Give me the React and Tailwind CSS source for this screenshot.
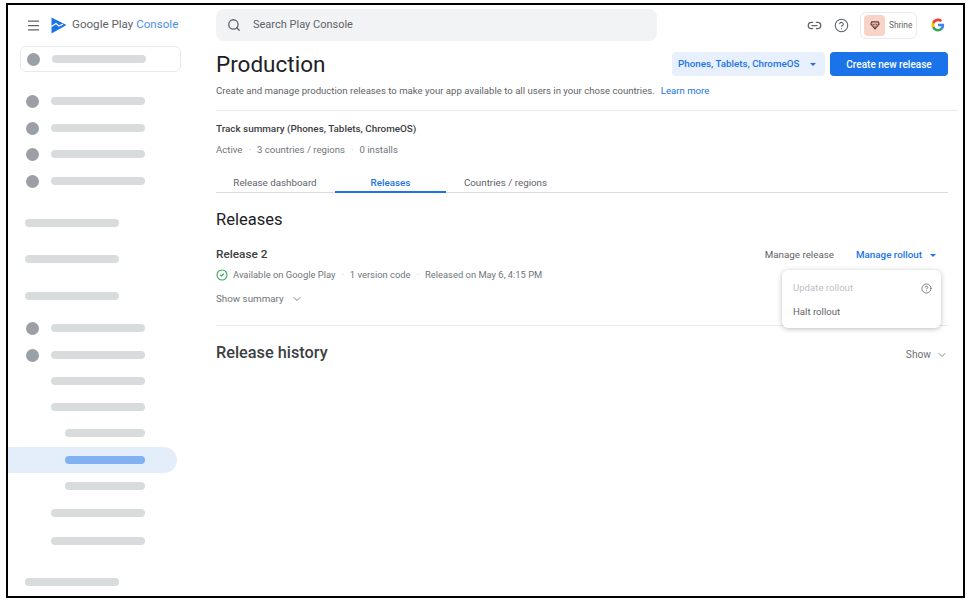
import React from "react";
import { ChevronDown, CircleCheck, CircleHelp, Link2, Menu, Search } from "lucide-react";

// mt = gap above the row, kind = how far the bar is indented
const NAV_ROWS = [
  { mt: "mt-[22.5px]", kind: "icon" },
  { mt: "mt-[14px]", kind: "icon" },
  { mt: "mt-[13px]", kind: "icon" },
  { mt: "mt-[14px]", kind: "icon" },
  { mt: "mt-[31.5px]", kind: "head" },
  { mt: "mt-[28px]", kind: "head" },
  { mt: "mt-[29px]", kind: "head" },
  { mt: "mt-[21.5px]", kind: "icon" },
  { mt: "mt-[14px]", kind: "icon" },
  { mt: "mt-[15.5px]", kind: "sub" },
  { mt: "mt-[18px]", kind: "sub" },
  { mt: "mt-[18px]", kind: "subsub" },
  { mt: "mt-[19px]", kind: "active" },
  { mt: "mt-[18px]", kind: "subsub" },
  { mt: "mt-[19px]", kind: "sub" },
  { mt: "mt-[20px]", kind: "sub" },
  { mt: "mt-[33px]", kind: "head" },
];

function Bar({ className }) {
  return <div className={`h-2 rounded-full bg-[#d8dcdc] ${className}`} />;
}

function NavRow({ row }) {
  if (row.kind === "icon") {
    return (
      <div className={`${row.mt} flex h-[13px] items-center pl-[18px]`}>
        <div className="h-[13px] w-[13px] rounded-full bg-[#9aa0a6]" />
        <Bar className="ml-3 w-[94px]" />
      </div>
    );
  }
  if (row.kind === "head") {
    return <div className={`${row.mt} flex h-2 pl-[17px]`}><Bar className="w-[94px]" /></div>;
  }
  if (row.kind === "sub") {
    return <div className={`${row.mt} flex h-2 pl-[43px]`}><Bar className="w-[94px]" /></div>;
  }
  if (row.kind === "subsub") {
    return <div className={`${row.mt} flex h-2 pl-[57px]`}><Bar className="w-[80px]" /></div>;
  }
  return (
    <div className={`${row.mt} flex h-2 items-center`}>
      <div className="flex h-[26px] w-[169px] shrink-0 items-center rounded-r-full bg-[#e4eefa] pl-[57px]">
        <div className="h-2 w-[80px] rounded-full bg-[#82b1f2]" />
      </div>
    </div>
  );
}

function Sidebar() {
  return (
    <aside className="w-[208px] shrink-0">
      <div className="flex h-[40px] items-center pl-[18px]">
        <Menu className="h-[15px] w-[15px] text-[#5f6368]" strokeWidth={2} />
        <svg viewBox="0 0 16 17" className="ml-[10px] h-[17px] w-[16px]">
          <path d="M0.5 0.5 15.5 8 0.5 16.5Z" fill="#1a73e8" />
          <path d="M0.5 9.5 5 6.5 8 9 12 7" fill="none" stroke="#fff" strokeWidth="1.3" />
        </svg>
        <span className="ml-[5px] text-[11.6px] whitespace-nowrap text-[#5f6368]">
          Google Play <span className="text-[#4a8fe7]">Console</span>
        </span>
      </div>
      <div className="mt-px ml-3 flex h-[26px] w-[161px] items-center rounded-md border border-[#e8eaed] pl-[6px]">
        <div className="h-[13px] w-[13px] rounded-full bg-[#9aa0a6]" />
        <Bar className="ml-3 w-[94px]" />
      </div>
      {NAV_ROWS.map((row, i) => <NavRow key={i} row={row} />)}
    </aside>
  );
}

function TopBar() {
  return (
    <div className="flex h-[40px] items-center pr-[15px]">
      <div className="flex h-[32px] w-[441px] items-center rounded-lg bg-[#f1f3f4] pl-[11px] text-[11px] text-[#5f6368]">
        <Search className="h-[14px] w-[14px]" strokeWidth={2.2} />
        <span className="ml-[12px]">Search Play Console</span>
      </div>
      <Link2 className="ml-auto h-[15px] w-[15px] text-[#5f6368]" strokeWidth={2} />
      <CircleHelp className="ml-[12px] h-[15px] w-[15px] text-[#5f6368]" strokeWidth={1.7} />
      <div className="ml-[11px] flex h-[27px] w-[57px] items-center rounded-md border border-[#e8eaed] pl-[3px]">
        <div className="flex h-[21px] w-[21px] items-center justify-center rounded bg-[#f8d3c8]">
          <svg viewBox="0 0 12 12" className="h-[10px] w-[10px]" fill="none" stroke="#6b3a32" strokeWidth="1.3">
            <path d="M2 2.2h8L11 5 6 10.8 1 5Z" />
            <path d="M1.5 5h9M4 5l2 5.5L8 5" strokeWidth="0.8" />
          </svg>
        </div>
        <span className="ml-[4px] text-[8.3px] text-[#5f6368]">Shrine</span>
      </div>
      <div className="ml-[11px] flex h-[20px] w-[20px] items-center justify-center rounded-full bg-white">
        <svg viewBox="0 0 48 48" className="h-[14px] w-[14px]">
          <path fill="#4285F4" d="M45.1 24.5c0-1.6-.1-3.1-.4-4.5H24v8.5h11.8c-.5 2.8-2 5.1-4.3 6.7v5.5h7c4.1-3.8 6.6-9.4 6.6-16.2z" />
          <path fill="#34A853" d="M24 46c5.9 0 10.9-2 14.5-5.3l-7-5.5c-2 1.3-4.5 2.1-7.5 2.1-5.7 0-10.6-3.9-12.3-9.1H4.4v5.7C8 41 15.4 46 24 46z" />
          <path fill="#FBBC05" d="M11.7 28.2c-.4-1.3-.7-2.7-.7-4.2s.3-2.9.7-4.2v-5.7H4.4C2.9 17 2 20.4 2 24s.9 7 2.4 9.9l7.3-5.7z" />
          <path fill="#EA4335" d="M24 10.8c3.2 0 6.1 1.1 8.4 3.3l6.3-6.3C34.9 4.2 29.9 2 24 2 15.4 2 8 7 4.4 14.1l7.3 5.7c1.7-5.2 6.6-9 12.3-9z" />
        </svg>
      </div>
    </div>
  );
}

function Dot() {
  return <span className="mx-[6px] text-[#bdc1c6]">·</span>;
}

function Content() {
  return (
    <div className="relative">
      <div className="mt-[7px] flex h-[24px] items-center justify-between pr-[15px]">
        <h1 className="text-[22.5px] leading-none text-[#202124]">Production</h1>
        <div className="flex gap-[5px]">
          <button className="flex h-[24px] w-[153px] items-center rounded-sm bg-[#e8f0fe] pl-[6px] text-[9.8px] font-medium text-[#1a73e8]">
            Phones, Tablets, ChromeOS
            <span className="ml-[11px] h-0 w-0 border-x-[3.5px] border-t-[3.5px] border-x-transparent border-t-[#1a73e8]" />
          </button>
          <button className="h-[24px] w-[118px] rounded-sm bg-[#1a73e8] text-[10px] font-medium text-white">
            Create new release
          </button>
        </div>
      </div>
      <p className="mt-[8px] h-[13px] text-[9.6px] leading-[13px] whitespace-nowrap text-[#5f6368]">
        Create and manage production releases to make your app available to all users in your chose countries.
        <span className="ml-[6px] text-[#1a73e8]">Learn more</span>
      </p>
      <div className="mt-[13px] mr-[5px] border-t border-[#e8eaed]" />

      <p className="mt-[11px] h-[13px] text-[9.9px] leading-[13px] font-medium text-[#3c4043]">Track summary (Phones, Tablets, ChromeOS)</p>
      <p className="mt-[8px] h-[13px] text-[9.6px] leading-[13px] text-[#70757a]">
        Active<Dot />3 countries / regions<Dot />0 installs
      </p>

      <div className="mt-[20px] mr-[15px] flex h-[17px] border-b border-[#dadce0] text-[9.8px] leading-[13px] text-[#5f6368]">
        <div className="flex w-[119px] justify-center pr-[1px]">Release dashboard</div>
        <div className="flex h-[17px] w-[111px] justify-center border-b-2 border-[#1a73e8] font-medium text-[#1a73e8]">Releases</div>
        <div className="flex w-[119px] justify-center">Countries / regions</div>
      </div>

      <h2 className="mt-[15px] h-[24px] text-[16.5px] leading-[24px] text-[#202124]">Releases</h2>

      <div className="mt-[15px] flex h-[16px] items-center pr-[27px]">
        <span className="text-[11.8px] font-medium text-[#3c4043]">Release 2</span>
        <span className="ml-auto text-[9.8px] text-[#5f6368]">Manage release</span>
        <span className="ml-[22px] text-[9.8px] font-medium text-[#1a73e8]">Manage rollout</span>
        <span className="ml-[8px] h-0 w-0 border-x-[3.5px] border-t-[3.5px] border-x-transparent border-t-[#1a73e8]" />
      </div>
      <div className="mt-[5px] flex h-[14px] items-center text-[9.4px] text-[#70757a]">
        <CircleCheck className="mr-[5px] h-[12px] w-[12px] text-[#34a853]" strokeWidth={2.2} />
        Available on Google Play<Dot />1 version code<Dot />Released on May 6, 4:15 PM
      </div>
      <div className="mt-[10px] flex h-[14px] items-center text-[9.8px] text-[#70757a]">
        Show summary
        <ChevronDown className="ml-[7px] h-[12px] w-[12px]" strokeWidth={1.8} />
      </div>

      <div className="mt-[19px] mr-[15px] border-t border-[#e8eaed]" />

      <div className="mt-[16px] flex h-[22px] items-center pr-[15px]">
        <h2 className="text-[16.3px] font-medium text-[#3c4043]">Release history</h2>
        <span className="mt-1 ml-auto text-[10.2px] text-[#70757a]">Show</span>
        <ChevronDown className="mt-1 ml-[5px] h-[12px] w-[12px] text-[#70757a]" strokeWidth={1.8} />
      </div>

      {/* rollout menu sits over the divider */}
      <div className="absolute top-[218px] right-[22px] w-[159px] rounded-md bg-white pt-[6px] pb-[4px] shadow-[0_1px_5px_rgba(60,64,67,0.35)]">
        <div className="flex h-[24px] items-center justify-between pr-[9px] pl-[11px] text-[9.6px] text-[#bdc1c6]">
          Update rollout
          <CircleHelp className="h-[11px] w-[11px] text-[#5f6368]" strokeWidth={1.7} />
        </div>
        <div className="flex h-[24px] items-center pl-[11px] text-[9.6px] text-[#5f6368]">Halt rollout</div>
      </div>
    </div>
  );
}

export default function App() {
  return (
    <div className="h-[600px] w-[969px] bg-white pt-[3px] pl-[6px] font-['Roboto',sans-serif]">
      <div className="flex h-[595px] w-[959px] overflow-hidden border-2 border-black">
        <Sidebar />
        <main className="min-w-0 flex-1">
          <TopBar />
          <Content />
        </main>
      </div>
    </div>
  );
}
